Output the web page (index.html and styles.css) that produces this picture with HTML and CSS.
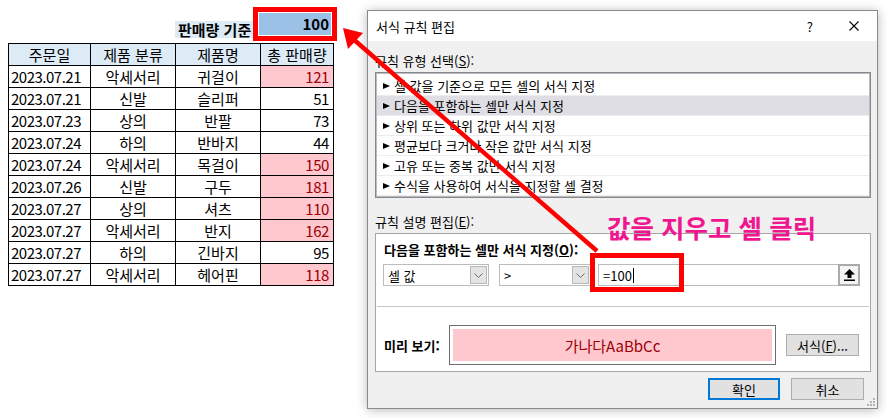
FILE: index.html
```html
<!DOCTYPE html>
<html lang="ko">
<head>
<meta charset="utf-8">
<title>서식 규칙 편집</title>
<link rel="stylesheet" href="styles.css">
</head>
<body>
<div class="page">
  <div class="sheet">
    <div class="criteria">
      <div class="crit-label">판매량 기준</div>
      <div class="crit-box"><div class="crit-value">100</div></div>
    </div>
    <table class="data">
      <colgroup><col class="c1"><col class="c2"><col class="c3"><col class="c4"></colgroup>
      <thead>
        <tr><th>주문일</th><th>제품 분류</th><th>제품명</th><th>총 판매량</th></tr>
      </thead>
      <tbody>
        <tr><td class="d">2023.07.21</td><td>악세서리</td><td>귀걸이</td><td class="n hot">121</td></tr>
        <tr><td class="d">2023.07.21</td><td>신발</td><td>슬리퍼</td><td class="n">51</td></tr>
        <tr><td class="d">2023.07.23</td><td>상의</td><td>반팔</td><td class="n">73</td></tr>
        <tr><td class="d">2023.07.24</td><td>하의</td><td>반바지</td><td class="n">44</td></tr>
        <tr><td class="d">2023.07.24</td><td>악세서리</td><td>목걸이</td><td class="n hot">150</td></tr>
        <tr><td class="d">2023.07.26</td><td>신발</td><td>구두</td><td class="n hot">181</td></tr>
        <tr><td class="d">2023.07.27</td><td>상의</td><td>셔츠</td><td class="n hot">110</td></tr>
        <tr><td class="d">2023.07.27</td><td>악세서리</td><td>반지</td><td class="n hot">162</td></tr>
        <tr><td class="d">2023.07.27</td><td>하의</td><td>긴바지</td><td class="n">95</td></tr>
        <tr><td class="d">2023.07.27</td><td>악세서리</td><td>헤어핀</td><td class="n hot">118</td></tr>
      </tbody>
    </table>
  </div>

  <div class="dialog">
    <div class="titlebar">
      <span class="title">서식 규칙 편집</span>
      <span class="help">?</span>
      <span class="close"><svg width="10" height="10" viewBox="0 0 10 10"><path d="M0.5 0.5 L9.5 9.5 M9.5 0.5 L0.5 9.5" stroke="#000" stroke-width="1.1" fill="none"/></svg></span>
    </div>
    <div class="dbody">
      <div class="lbl lbl-type">규칙 유형 선택(<u>S</u>):</div>
      <div class="listbox">
        <div class="item"><i class="tri"></i>셀 값을 기준으로 모든 셀의 서식 지정</div>
        <div class="item sel"><i class="tri"></i>다음을 포함하는 셀만 서식 지정</div>
        <div class="item"><i class="tri"></i>상위 또는 하위 값만 서식 지정</div>
        <div class="item"><i class="tri"></i>평균보다 크거나 작은 값만 서식 지정</div>
        <div class="item"><i class="tri"></i>고유 또는 중복 값만 서식 지정</div>
        <div class="item"><i class="tri"></i>수식을 사용하여 서식을 지정할 셀 결정</div>
      </div>
      <div class="lbl lbl-desc">규칙 설명 편집(<u>E</u>):</div>
      <div class="group">
        <div class="g-title">다음을 포함하는 셀만 서식 지정(<u>O</u>):</div>
        <div class="cond">
          <div class="combo c-a"><span>셀 값</span><span class="dd"><svg width="9" height="5" viewBox="0 0 9 5"><path d="M0.5 0.5 L4.5 4.5 L8.5 0.5" stroke="#6a6a6a" fill="none"/></svg></span></div>
          <div class="combo c-b"><span>&gt;</span><span class="dd"><svg width="9" height="5" viewBox="0 0 9 5"><path d="M0.5 0.5 L4.5 4.5 L8.5 0.5" stroke="#6a6a6a" fill="none"/></svg></span></div>
          <div class="field"><span>=100</span><span class="caret"></span><span class="refbtn"><svg width="11" height="12" viewBox="0 0 11 12"><path d="M5.5 0 L11 5.5 L7.5 5.5 L7.5 9 L3.5 9 L3.5 5.5 L0 5.5 Z" fill="#000"/><rect x="0" y="10.5" width="11" height="1.5" fill="#000"/></svg></span></div>
        </div>
        <div class="sep"></div>
        <div class="preview-row">
          <div class="pv-label">미리 보기:</div>
          <div class="preview"><div class="pv-inner">가나다AaBbCc</div></div>
          <div class="btn fmt">서식(<u>F</u>)...</div>
        </div>
      </div>
      <div class="actions">
        <div class="btn ok">확인</div>
        <div class="btn cancel">취소</div>
      </div>
    </div>
    <svg class="grip" width="9" height="9" viewBox="0 0 9 9">
      <rect x="6" y="0" width="2" height="2" fill="#b4b4b4"/>
      <rect x="3" y="3" width="2" height="2" fill="#b4b4b4"/>
      <rect x="6" y="3" width="2" height="2" fill="#b4b4b4"/>
      <rect x="0" y="6" width="2" height="2" fill="#b4b4b4"/>
      <rect x="3" y="6" width="2" height="2" fill="#b4b4b4"/>
      <rect x="6" y="6" width="2" height="2" fill="#b4b4b4"/>
    </svg>
  </div>
</div>

<div class="note">값을 지우고 셀 클릭</div>
<div class="hl-box"></div>
<svg class="arrow" width="887" height="418" viewBox="0 0 887 418">
  <line x1="597" y1="251" x2="352" y2="38" stroke="#ff0000" stroke-width="4.5"/>
  <polygon points="343,28 363,33 348,49" fill="#ff0000"/>
</svg>
</body>
</html>
```

FILE: styles.css
```css
html, body {
  margin: 0;
  padding: 0;
}
body {
  position: relative;
  width: 887px;
  height: 418px;
  overflow: hidden;
  background: #ffffff;
  font-family: "Noto Sans CJK KR", "Noto Sans", sans-serif;
  color: #000;
}
u { text-decoration: underline; text-underline-offset: 1px; }

.page {
  display: flex;
  align-items: flex-start;
}

/* ---------- sheet ---------- */
.sheet {
  padding: 7px 0 0 8px;
  width: 325px;
}
.criteria {
  display: flex;
  justify-content: flex-end;
  height: 36px;
}
.crit-label {
  align-self: flex-end;
  margin-bottom: 5px;
  width: 78px;
  height: 17px;
  box-sizing: border-box;
  padding-left: 3px;
  background: #ddebf7;
  font-size: 15px;
  font-weight: bold;
  line-height: 17px;
  white-space: nowrap;
}
.crit-box {
  align-self: flex-start;
  border: 5px solid #ff0000;
  padding: 1px;
  margin-right: -4px;
  background: #fff;
  position: relative;
  z-index: 1;
}
.crit-value {
  width: 72px;
  height: 22px;
  box-sizing: border-box;
  padding-right: 2px;
  background: #9bc2e6;
  text-align: right;
  font-size: 15px;
  font-weight: bold;
  line-height: 22px;
}

table.data {
  border-collapse: collapse;
  table-layout: fixed;
  width: 325px;
  font-size: 15px;
}
col.c1 { width: 82px; }
col.c2 { width: 85px; }
col.c3 { width: 85px; }
col.c4 { width: 73px; }
table.data th,
table.data td {
  border: 1px solid #000;
  height: 21px;
  padding: 0 2px;
  line-height: 20px;
  text-align: center;
  font-weight: normal;
  white-space: nowrap;
  overflow: hidden;
}
table.data th { background: #ddebf7; }
table.data td.d { text-align: left; letter-spacing: -0.5px; }
table.data td.n { text-align: right; padding-right: 4px; letter-spacing: -0.4px; }
table.data td.hot { background: #ffc7ce; color: #9c0006; }

/* ---------- dialog ---------- */
.dialog {
  position: relative;
  margin-left: 34px;
  margin-top: 10px;
  width: 511px;
  height: 399px;
  box-sizing: border-box;
  border: 1px solid #8a8a8a;
  background: #f0f0f0;
  box-shadow: 0 1px 10px rgba(0, 0, 0, 0.28);
  font-size: 13px;
}
.titlebar {
  height: 30px;
  background: #fff;
  display: flex;
  align-items: center;
  padding-left: 8px;
}
.help {
  margin-left: auto;
  margin-right: 36px;
  font-size: 13px;
}
.close {
  display: flex;
  width: 10px;
  height: 10px;
  margin-right: 18px;
}
.dbody {
  padding: 0 6px 0 7px;
}
.lbl {
  height: 16px;
  line-height: 16px;
}
.lbl-type { margin-top: 12px; }
.lbl-desc { margin-top: 16px; }

.listbox {
  margin-top: 3px;
  height: 126px;
  box-sizing: border-box;
  border: 1px solid #828790;
  box-shadow: inset 0 0 0 1px #bdbdbd;
  background: #fff;
  padding: 3px 1px;
}
.item {
  height: 20px;
  box-sizing: border-box;
  border-bottom: 1px solid #ececec;
  display: flex;
  align-items: center;
  padding-left: 6px;
}
.item.sel { background: #dedee4; }
.tri {
  width: 0;
  height: 0;
  border-left: 7px solid #000;
  border-top: 3.5px solid transparent;
  border-bottom: 3.5px solid transparent;
  margin-right: 4px;
}

.group {
  margin-top: 3px;
  height: 139px;
  box-sizing: border-box;
  border: 1px solid #a5a5a5;
  background: #fff;
}
.g-title {
  margin-top: 8px;
  padding-left: 8px;
  height: 16px;
  line-height: 16px;
  font-weight: bold;
}
.cond {
  display: flex;
  margin-top: 6px;
  padding-left: 7px;
  height: 22px;
}
.combo {
  height: 22px;
  box-sizing: border-box;
  border: 1px solid #bcbcbc;
  background: #fff;
  display: flex;
  align-items: center;
  padding-left: 4px;
}
.c-a { width: 106px; }
.c-b { width: 92px; margin-left: 10px; }
.dd {
  margin-left: auto;
  margin-right: 1px;
  width: 17px;
  height: 18px;
  box-sizing: border-box;
  background: #e4e4e4;
  border: 1px solid #b8b8b8;
  display: flex;
  align-items: center;
  justify-content: center;
}
.field {
  margin-left: 7px;
  width: 262px;
  height: 22px;
  box-sizing: border-box;
  border: 1px solid #bcbcbc;
  display: flex;
  align-items: center;
  padding-left: 4px;
}
.caret {
  width: 1px;
  height: 15px;
  background: #000;
  margin-left: 1px;
}
.refbtn {
  margin: -1px -1px -1px auto;
  width: 22px;
  height: 22px;
  box-sizing: border-box;
  border: 2px solid #ababab;
  background: #f4f4f4;
  display: flex;
  align-items: center;
  justify-content: center;
}
.sep {
  margin: 20px 1px 0;
  height: 1px;
  background: #c8c8c8;
}
.preview-row {
  display: flex;
  align-items: center;
  margin-top: 18px;
  padding-left: 8px;
}
.pv-label {
  width: 65px;
  font-weight: bold;
}
.preview {
  width: 327px;
  height: 40px;
  box-sizing: border-box;
  border: 1px solid #6e6e6e;
  padding: 3px;
  background: #fff;
}
.pv-inner {
  height: 100%;
  background: #ffc7ce;
  color: #9c0006;
  font-size: 15px;
  display: flex;
  align-items: center;
  justify-content: center;
}
.btn {
  width: 72px;
  height: 22px;
  box-sizing: border-box;
  background: #e1e1e1;
  border: 1px solid #adadad;
  display: flex;
  align-items: center;
  justify-content: center;
}
.btn.fmt { margin-left: 10px; width: 73px; }
.actions {
  display: flex;
  justify-content: flex-end;
  gap: 11px;
  margin-top: 6px;
  padding-right: 7px;
}
.btn.ok { border: 2px solid #0078d7; }
.btn.cancel { width: 73px; }
.grip {
  position: absolute;
  right: 1px;
  bottom: 1px;
}

/* ---------- annotations ---------- */
.note {
  position: absolute;
  left: 607px;
  top: 212px;
  font-size: 25.5px;
  line-height: 30px;
  font-weight: bold;
  color: #f0168f;
  white-space: nowrap;
}
.hl-box {
  position: absolute;
  left: 590px;
  top: 253px;
  width: 94px;
  height: 39px;
  box-sizing: border-box;
  border: 5px solid #ff0000;
}
.arrow {
  position: absolute;
  left: 0;
  top: 0;
  pointer-events: none;
}
```
